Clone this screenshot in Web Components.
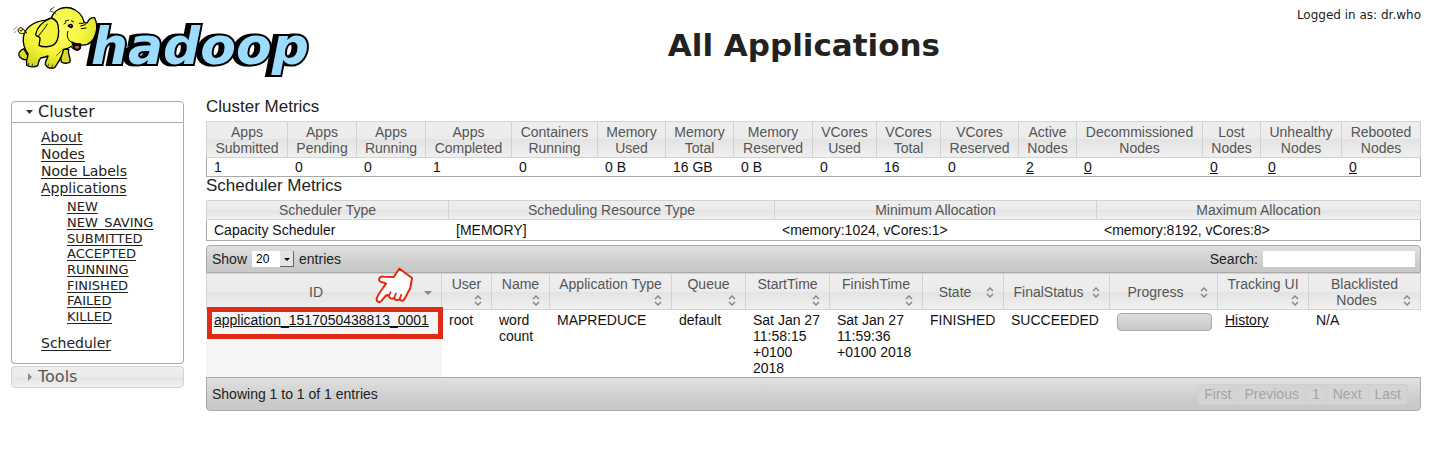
<!DOCTYPE html>
<html lang="en">
<head>
<meta charset="utf-8">
<title>All Applications</title>
<style>
body { margin: 0; background: #fff; color: #222; font-family: "DejaVu Sans", Verdana, sans-serif; font-size: 14px; }
</style>
</head>
<body>
<cluster-page>
  <page-header slot="header">
    <hadoop-logo slot="logo"></hadoop-logo>
    <span slot="title">All Applications</span>
    <span slot="user">Logged in as: dr.who</span>
  </page-header>
  <cluster-nav slot="nav"></cluster-nav>
  <metrics-table kind="cluster">Cluster Metrics</metrics-table>
  <metrics-table kind="scheduler">Scheduler Metrics</metrics-table>
  <apps-table></apps-table>
</cluster-page>

<script>
const define = (name, html) => customElements.define(name, class extends HTMLElement {
  constructor() {
    super();
    const t = document.createElement('template');
    t.innerHTML = typeof html === 'function' ? html(this) : html;
    this.attachShadow({ mode: 'open' }).appendChild(t.content.cloneNode(true));
  }
});

const tableCss = `
  table { width: 100%; table-layout: fixed; border-collapse: separate; border-spacing: 0; font-size: 14px; line-height: 16px; }
  th { box-sizing: border-box; font-weight: normal; color: #555; text-align: center; padding: 2px 0 1px;
       border: 1px solid #d3d3d3; border-left-width: 0;
       background: linear-gradient(#eee 0, #ebebeb 50%, #e3e3e3 50%, #f0f0f0 100%); }
  th:first-child { border-left-width: 1px; }
  td { vertical-align: top; color: #111; }
  a { color: #111; }
`;
const cols = ws => `<colgroup>${ws.map(w => `<col style="width:${w}px">`).join('')}</colgroup>`;

define('cluster-page', `
  <style>
    :host { display: block; padding: 0 13px 16px 11px; }
    .body { display: flex; gap: 22px; align-items: flex-start; }
    nav { flex: none; width: 173px; padding-top: 3px; }
    main { flex: 1; min-width: 0; }
  </style>
  <slot name="header"></slot>
  <div class="body">
    <nav><slot name="nav"></slot></nav>
    <main><slot></slot></main>
  </div>`);

define('page-header', `
  <style>
    :host { display: flex; height: 98px; }
    .logo { flex: none; width: 300px; }
    h1 { flex: 1; margin: 0; padding-top: 26px; text-align: center; font-size: 31px; line-height: 38px; }
    .user { padding-top: 7px; font-size: 12px; line-height: 16px; }
  </style>
  <div class="logo"><slot name="logo"></slot></div>
  <h1><slot name="title"></slot></h1>
  <div class="user"><slot name="user"></slot></div>`);

define('hadoop-logo', `
  <style>
    :host { display: block; }
    svg { display: block; overflow: visible; }
    text { font: italic bold 52px "DejaVu Sans", sans-serif; stroke: #000; stroke-width: 4px; stroke-linejoin: miter;
           paint-order: stroke; fill: #9cdcff; filter: drop-shadow(-4px 0 0 #000); }
  </style>
  <svg width="300" height="80" viewBox="11 0 300 80" role="img" aria-label="Hadoop">
    <text x="91" y="64">hadoop</text>
    <defs>
      <radialGradient id="skin" cx="45%" cy="35%" r="70%">
        <stop offset="0" stop-color="#ffff78"/><stop offset=".55" stop-color="#f5f53c"/><stop offset="1" stop-color="#cdd21e"/>
      </radialGradient>
    </defs>
    <g transform="scale(.3333)" stroke="#000" stroke-linecap="round" stroke-linejoin="round" fill="none" stroke-width="4">
      <path fill="#d8dc2c" d="M72 146C58 152 52 162 60 172C68 180 80 180 88 176Z"/>
      <path fill="#d8dc2c" d="M178 148L206 148C202 164 214 176 210 186C202 192 190 190 184 186Z"/>
      <path fill="url(#skin)" d="M134 61C100 64 74 84 70 112C68 134 74 148 84 162C84 174 76 184 80 195C88 202 104 202 113 197C116 188 116 180 122 174C132 172 138 170 144 168C142 178 134 184 136 193C142 204 154 206 164 203C172 190 188 172 190 148C200 147 208 144 214 139C220 150 234 154 241 145L242 135C268 138 282 122 288 98C292 84 290 66 284 53C274 52 266 58 262 68C258 70 254 68 252 66C248 46 232 30 212 24C186 18 162 30 154 54C146 56 138 60 134 61Z"/>
      <path fill="#f3f33c" d="M154 54C130 64 110 82 107 104C108 112 122 106 120 118L117 136C128 142 150 142 162 134C174 124 176 106 176 92C176 74 170 58 154 54Z"/>
      <path d="M116 107C126 94 136 84 142 72M204 94C198 108 204 124 218 128" stroke-width="3"/>
      <path fill="#111" d="M216 126C222 130 234 132 242 132C242 142 240 150 230 150C224 148 218 138 216 126Z"/>
      <path stroke="none" fill="#e06050" d="M224 141C228 136 236 138 238 142C236 148 228 148 224 141Z"/>
      <path stroke="none" fill="#000" d="M202 78C206 70 216 68 220 78L216 85C210 86 206 80 202 78Z"/>
      <path stroke="#fff" stroke-width="2" d="M210 76L213 78"/>
      <path stroke-width="3" d="M196 64L206 60M192 72L198 68M214 62L221 66M242 78L256 74M244 86L258 84M238 70L250 70"/>
      <path stroke-width="2" d="M168 42C162 36 158 34 153 35M160 44L156 50M152 28L162 22M150 34L154 27"/>
      <path fill="#f3f33c" d="M76 98C64 106 54 98 54 90C56 82 66 80 68 88C67 94 61 94 60 91M69 86C74 91 74 95 80 99" stroke-width="3"/>
      <path stroke-width="2" stroke="#555" d="M42 90L50 80M43 98L48 94"/>
      <path stroke-width="2" d="M84 196L86 190M96 199L98 192M144 198L146 192M155 202L158 195M182 153C178 158 176 162 170 166"/>
    </g>
  </svg>`);

const subs = ['NEW', 'NEW_SAVING', 'SUBMITTED', 'ACCEPTED', 'RUNNING', 'FINISHED', 'FAILED', 'KILLED'];
define('cluster-nav', `
  <style>
    :host { display: block; }
    button { display: flex; align-items: center; gap: 4px; box-sizing: border-box; width: 100%; height: 22px; padding: 0 0 0 13px;
             font: 16px/20px "DejaVu Sans", Verdana, sans-serif; text-align: left; border: 1px solid #d3d3d3; border-radius: 4px;
             color: #555; background: linear-gradient(#eee 0, #ebebeb 50%, #e3e3e3 50%, #f0f0f0 100%); }
    button.open { color: #222; background: #fff; border-color: #aaa; border-radius: 4px 4px 0 0; }
    .panel { border: 1px solid #aaa; border-top: 0; border-radius: 0 0 4px 4px; padding: 6px 0 11px 29px; margin-bottom: 2px; }
    ul { margin: 0; padding: 0; list-style: none; line-height: 17px; }
    ul ul { padding: 2px 0 10px 26px; font-size: 13px; line-height: 16px; }
    ul ul li:nth-child(3n) { line-height: 15px; }
    a { color: #222; text-underline-offset: 2px; }
  </style>
  <button class="open" type="button" aria-expanded="true"><svg width="9" height="8" aria-hidden="true"><path d="M1 2h7L4.500 6z" fill="#333"/></svg>Cluster</button>
  <div class="panel"><ul>
    <li><a href="#about">About</a></li>
    <li><a href="#nodes">Nodes</a></li>
    <li><a href="#labels">Node Labels</a></li>
    <li><a href="#apps">Applications</a><ul>${subs.map(s => `<li><a href="#${s}">${s}</a></li>`).join('')}</ul></li>
    <li><a href="#scheduler">Scheduler</a></li>
  </ul></div>
  <button type="button" aria-expanded="false"><svg width="9" height="8" aria-hidden="true"><path d="M3 0v8L7 4z" fill="#888"/></svg>Tools</button>`);

const metrics = {
  cluster: [
    [82, 'Apps Submitted', '1'], [69, 'Apps Pending', '0'], [69, 'Apps Running', '0'], [86, 'Apps Completed', '1'],
    [86, 'Containers Running', '0'], [68, 'Memory Used', '0 B'], [68, 'Memory Total', '16 GB'], [79, 'Memory Reserved', '0 B'],
    [64, 'VCores Used', '0'], [64, 'VCores Total', '16'], [78, 'VCores Reserved', '0'],
    [58, 'Active Nodes', '<a href="#active">2</a>'], [126, 'Decommissioned Nodes', '<a href="#decom">0</a>'],
    [58, 'Lost Nodes', '<a href="#lost">0</a>'], [81, 'Unhealthy Nodes', '<a href="#unhealthy">0</a>'],
    [79, 'Rebooted Nodes', '<a href="#rebooted">0</a>']
  ].map(([w, h, v]) => [w, h.replace(' ', '<br>'), v]),
  scheduler: [
    [243, 'Scheduler Type', 'Capacity Scheduler'], [326, 'Scheduling Resource Type', '[MEMORY]'],
    [322, 'Minimum Allocation', '&lt;memory:1024, vCores:1&gt;'], [324, 'Maximum Allocation', '&lt;memory:8192, vCores:8&gt;']
  ]
};
define('metrics-table', el => {
  const kind = el.getAttribute('kind'), m = metrics[kind];
  return `
  <style>
    :host { display: block; font-family: "Liberation Sans", Helvetica, Arial, sans-serif; }
    h2 { margin: 0; padding-bottom: 5px; font-size: 17px; line-height: 18px; font-weight: normal; color: #222; }
    ${tableCss}
    td { padding: 1px 0 1px 7px; border-bottom: 1px solid #aaa; }
    td:first-child { border-left: 1px solid #aaa; }
    td:last-child { border-right: 1px solid #aaa; }
    .scheduler th { padding-top: 1px; }
    .scheduler td { padding-top: 2px; padding-bottom: 2px; }
  </style>
  <h2><slot></slot></h2>
  <table class="${kind}">${cols(m.map(c => c[0]))}
    <thead><tr>${m.map(c => `<th scope="col">${c[1]}</th>`).join('')}</tr></thead>
    <tbody><tr>${m.map(c => `<td>${c[2]}</td>`).join('')}</tr></tbody>
  </table>`;
});

const sort = cls => `<svg class="${cls}" width="16" height="16" viewBox="0 0 16 16" aria-hidden="true"><path d="M5 7L8 4L11 7M5 10L8 13L11 10" fill="none" stroke="#888" stroke-width="1.500"/></svg>`;
const sortDown = `<svg class="side" width="16" height="16" viewBox="0 0 16 16" aria-hidden="true"><path d="M4 7h8L8 11z" fill="#888"/></svg>`;
const heads = [
  [236, sortDown + 'ID'], [50, 'User' + sort('below')], [58, 'Name' + sort('below')], [122, 'Application Type' + sort('below')],
  [74, 'Queue' + sort('below')], [84, 'StartTime' + sort('below')], [93, 'FinishTime' + sort('below')], [81, sort('side') + 'State'],
  [106, sort('side') + 'FinalStatus'], [108, sort('side') + 'Progress'], [91, 'Tracking UI' + sort('below')],
  [112, 'Blacklisted<br>' + sort('side') + 'Nodes']
];
define('apps-table', `
  <style>
    :host { display: block; margin-top: 4px; font-family: "Liberation Sans", Helvetica, Arial, sans-serif; font-size: 14px; line-height: 16px; }
    .bar { display: flex; align-items: center; justify-content: space-between; box-sizing: border-box; height: 28px; padding: 0 5px;
           border: 1px solid #aaa; border-radius: 4px 4px 0 0; color: #222; background: linear-gradient(#e0e0e0, #c9c9c9 80%); }
    .bar.foot { height: 34px; padding-right: 12px; border-radius: 0 0 4px 4px; }
    label { display: flex; align-items: center; gap: 5px; }
    .pick { display: flex; position: relative; }
    select { appearance: none; box-sizing: border-box; width: 42px; height: 16px; margin: 0; padding: 0 0 0 4px; border: 0; border-radius: 0;
             background: #fff; color: #000; font: 12px/16px "Liberation Sans", Arial, sans-serif; }
    .pick svg { position: absolute; right: 0; top: 0; pointer-events: none; }
    input { box-sizing: border-box; width: 152px; height: 16px; margin: 0; padding: 0 2px; border: 0; background: #fff; font: inherit; }
    ${tableCss}
    th button { display: block; width: 100%; margin: 0; padding: 0 5px; border: 0; background: none; color: inherit; font: inherit; text-align: center; white-space: nowrap; }
    .side { float: right; }
    .below { display: block; margin-left: auto; }
    td { position: relative; padding: 2px 6px 1px 7px; }
    td.id { padding-left: 8px; background: #f5f5f5; }
    td.bar-cell { padding-top: 3px; }
    .progress { box-sizing: border-box; height: 18px; border: 1px solid #aaa; border-radius: 4px; background: linear-gradient(#ddd, #c9c9c9); }
    .frame { position: absolute; left: 1px; right: -1px; top: -3px; height: 32px; box-sizing: border-box; border: 5px solid #e22b14; pointer-events: none; }
    .hand { position: absolute; left: 169px; top: -43px; pointer-events: none; }
    .pages { display: flex; }
    .pages button { box-sizing: border-box; height: 21px; margin: 0; padding: 0 6px; border: 1px solid #cfcfcf; border-left-width: 0; background: #d4d4d4;
                    color: #a5a5a5; font: inherit; }
    .pages button:first-child { border-left-width: 1px; border-radius: 4px 0 0 4px; }
    .pages button:last-child { border-radius: 0 4px 4px 0; }
  </style>
  <div class="bar">
    <label>Show <span class="pick"><select><option>10</option><option selected>20</option><option>50</option></select>
      <svg width="14" height="16" aria-hidden="true"><path d="M0 0h14v16H0z" fill="#e4e4e4"/><path d="M0 15h13V0h1v16H0z" fill="#666"/><path d="M4 7h6L7 10z" fill="#000"/></svg></span> entries</label>
    <label>Search: <input type="text"></label>
  </div>
  <table>${cols(heads.map(h => h[0]))}
    <thead><tr>${heads.map(h => `<th scope="col"><button type="button">${h[1]}</button></th>`).join('')}</tr></thead>
    <tbody><tr>
      <td class="id"><a href="#app">application_1517050438813_0001</a>
        <span class="frame"></span>
        <svg class="hand" width="39" height="36" viewBox="525 80 117 108" aria-hidden="true">
          <path d="M598 85L636 113L631 143L613 177C609 184 600 182 599 175C596 182 583 180 583 172C577 178 566 174 567 165C560 163 556 165 553 171L545 181C538 189 527 183 531 172C538 155 548 145 558 130C552 126 541 127 538 121C535 112 543 108 552 109L581 110Z" fill="#fff" stroke="#e22b14" stroke-width="6" stroke-linejoin="round"/>
          <path d="M567 165L572 155M583 172L588 159M599 175L604 163" fill="none" stroke="#e22b14" stroke-width="5" stroke-linecap="round"/>
        </svg></td>
      <td>root</td><td>word count</td><td>MAPREDUCE</td><td>default</td>
      <td>Sat Jan 27 11:58:15 +0100 2018</td><td>Sat Jan 27 11:59:36 +0100 2018</td>
      <td>FINISHED</td><td>SUCCEEDED</td>
      <td class="bar-cell"><div class="progress" role="progressbar" aria-label="Progress"></div></td>
      <td><a href="#history">History</a></td><td>N/A</td>
    </tr></tbody>
  </table>
  <div class="bar foot">
    <span>Showing 1 to 1 of 1 entries</span>
    <div class="pages">${['First', 'Previous', '1', 'Next', 'Last'].map(p => `<button type="button" disabled>${p}</button>`).join('')}</div>
  </div>`);
</script>
</body>
</html>
